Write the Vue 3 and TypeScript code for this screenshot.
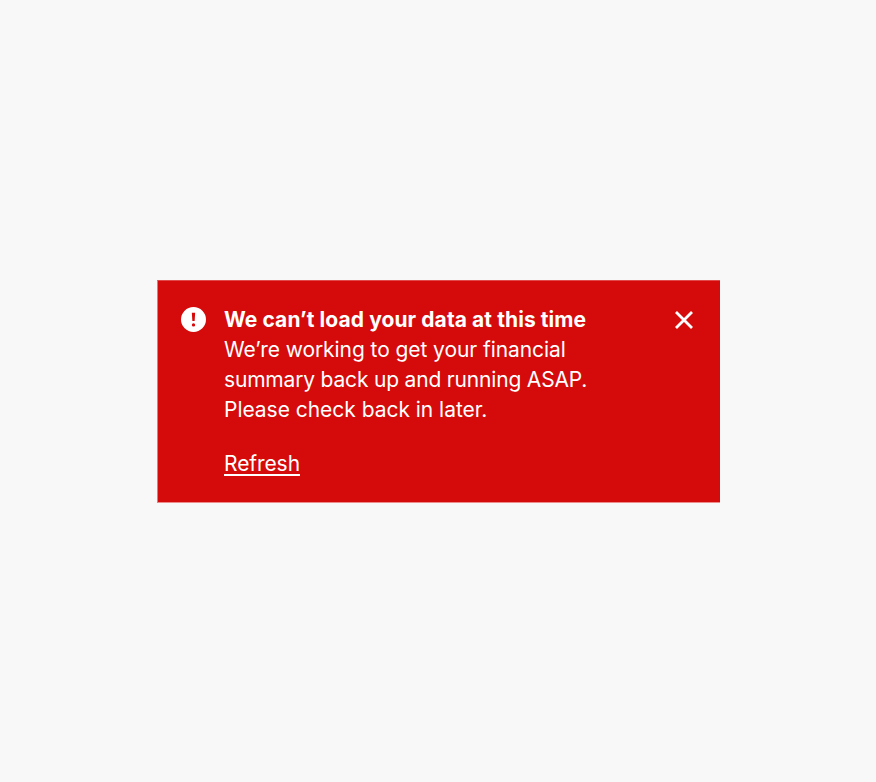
<script setup lang="ts">
const lines: string[] = [
  "We’re working to get your financial",
  "summary back up and running ASAP.",
  "Please check back in later.",
];
</script>

<template>
  <main class="page">
    <section class="alert" role="alert">
      <svg class="icon" viewBox="0 0 24 24" width="25" height="25" aria-hidden="true">
        <path
          fill="#fff"
          fill-rule="evenodd"
          d="M12 0a12 12 0 1 0 0 24 12 12 0 0 0 0-24Zm-1.6 5.5h3.2l-.5 8h-2.2l-.5-8ZM12 18.8a1.6 1.6 0 1 1 0-3.2 1.6 1.6 0 0 1 0 3.2Z"
        />
      </svg>
      <div class="content">
        <h2 class="title">We can’t load your data at this time</h2>
        <p class="body">
          <span v-for="line in lines" :key="line" class="line">{{ line }}</span>
        </p>
        <a class="link" href="#">Refresh</a>
      </div>
      <button class="close" type="button" aria-label="Close">
        <svg viewBox="0 0 24 24" width="24" height="24" aria-hidden="true">
          <path d="M4 4 20 20M20 4 4 20" stroke="#fff" stroke-width="2.8" fill="none" />
        </svg>
      </button>
    </section>
  </main>
</template>

<style scoped>
.page {
  min-height: 782px;
  background: #f8f8f8;
  display: flex;
  justify-content: center;
  align-items: flex-start;
  padding-top: 280px;
  box-sizing: border-box;
}
.alert {
  width: 563px;
  height: 223px;
  box-sizing: border-box;
  background: #d50b0b;
  color: #fff;
  display: flex;
  padding: 23px 24px 23px 23px;
  border-top: 1px solid #e04a4a;
  border-left: 1px solid #e87878;
  border-bottom: 1px solid #ee8c8c;
  font-family: Inter, "Liberation Sans", sans-serif;
  margin-right: -1px;
}
.icon {
  flex: none;
  margin: 3px 18px 0 0;
}
.content {
  flex: 1;
  min-width: 0;
  padding-top: 1px;
}
.title {
  margin: 0;
  font-size: 21px;
  line-height: 30px;
  font-weight: 700;
  letter-spacing: 0.08px;
}
.body {
  margin: 0 0 24px;
  font-size: 21px;
  line-height: 30px;
  letter-spacing: -0.18px;
}
.line {
  display: block;
}
.line:nth-child(1) {
  letter-spacing: -0.07px;
}
.line:nth-child(3) {
  letter-spacing: -0.03px;
}
.link {
  color: #fff;
  font-size: 21px;
  line-height: 30px;
  letter-spacing: -0.08px;
  text-decoration: underline;
  text-decoration-thickness: 2px;
  text-underline-offset: 3px;
}
.close {
  flex: none;
  align-self: flex-start;
  width: 24px;
  height: 24px;
  padding: 0;
  margin: 4px 0 0;
  background: none;
  border: 0;
}
</style>

<style>
html,
body {
  margin: 0;
  background: #f8f8f8;
}
</style>
